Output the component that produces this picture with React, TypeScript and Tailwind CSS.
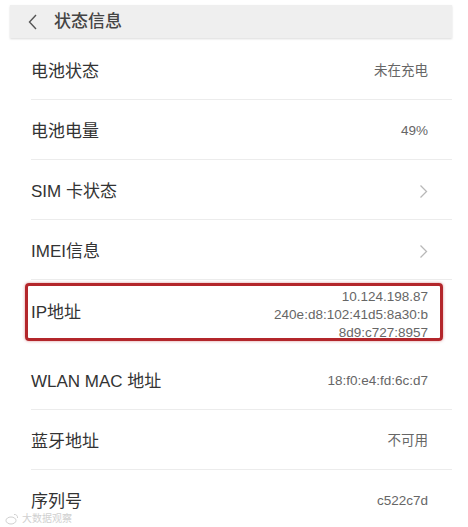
import { ReactNode } from 'react';

const FONT = "'Liberation Sans', 'Noto Sans CJK SC', sans-serif";

function Chevron() {
  return (
    <svg width="9" height="15" viewBox="0 0 9 15" fill="none">
      <path d="M1.5 1.5 L7.5 7.5 L1.5 13.5" stroke="#b8b8b8" strokeWidth="1.3" />
    </svg>
  );
}

function Row({ label, children }: { label: string; children: ReactNode }) {
  return (
    <div className="ml-[31px] w-[421px] h-[60px] pt-[4px] flex items-center justify-between pr-[24px] border-b border-[#ececec]">
      <span className="text-[17px] text-[#333]">{label}</span>
      <span className="text-[13.5px] text-[#666] flex items-center">{children}</span>
    </div>
  );
}

export default function App() {
  return (
    <div className="w-[468px] h-[527px] bg-white overflow-hidden relative" style={{ fontFamily: FONT }}>
      <div className="pt-[5px]">
        <div className="ml-[10px] w-[442px] h-[33px] bg-[#efefef] flex items-center shadow-[0_1px_2px_rgba(0,0,0,0.15)]">
          <svg width="10" height="16" viewBox="0 0 10 16" fill="none" className="ml-[18px]">
            <path d="M8 1 L1.5 8 L8 15" stroke="#555" strokeWidth="1.4" />
          </svg>
          <span className="ml-[16px] text-[17px] font-medium text-[#444]">状态信息</span>
        </div>
      </div>

      <div className="mt-[2px] flex flex-col">
        <Row label="电池状态">未在充电</Row>
        <Row label="电池电量">49%</Row>
        <Row label="SIM 卡状态"><Chevron /></Row>
        <Row label="IMEI信息"><Chevron /></Row>

        <div className="h-[70px] pt-[3px]">
          <div className="ml-[25px] w-[418px] h-[58px] border-[3px] border-[#b3262b] rounded-[4px] shadow-[0_0_3px_rgba(179,38,43,0.5)] flex items-center justify-between pl-[3px] pr-[12px]">
            <span className="text-[17px] text-[#333] pt-[2px]">IP地址</span>
            <div className="text-[13.5px] leading-[18px] text-[#666] text-right pt-[6px]">
              <div>10.124.198.87</div>
              <div>240e:d8:102:41d5:8a30:b</div>
              <div>8d9:c727:8957</div>
            </div>
          </div>
        </div>

        <Row label="WLAN MAC 地址">18:f0:e4:fd:6c:d7</Row>
        <Row label="蓝牙地址">不可用</Row>
        <Row label="序列号">c522c7d</Row>
      </div>

      <div className="absolute left-[5px] bottom-[2px] flex items-center gap-[3px] text-[10px] leading-[12px] text-[#d0d0d0]">
        <svg width="14" height="12" viewBox="0 0 14 12" fill="none">
          <ellipse cx="6" cy="7.5" rx="5" ry="3.5" stroke="#d0d0d0" strokeWidth="1" />
          <path d="M9 1.5 A3 3 0 0 1 12.5 5" stroke="#d0d0d0" strokeWidth="1" />
        </svg>
        <span>大数据观察</span>
      </div>
    </div>
  );
}
